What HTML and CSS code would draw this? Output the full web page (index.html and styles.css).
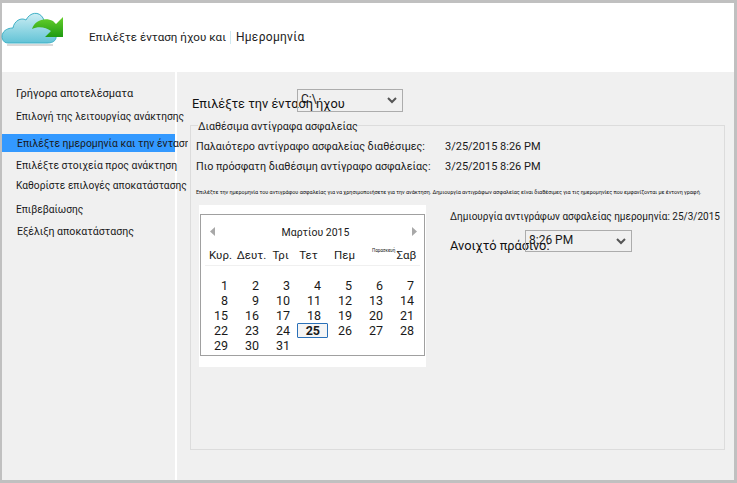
FILE: index.html
```html
<!DOCTYPE html>
<html lang="el">
<head>
    <meta charset="UTF-8">
    <title>Επιλέξτε ένταση ήχου και Ημερομηνία</title>
    <link rel="stylesheet" href="styles.css">
</head>
<body>
<div class="window">
    <header class="top">
        <svg class="logo" width="66" height="46" viewBox="0 0 66 46">
            <defs>
                <linearGradient id="cloud" x1="0" y1="0" x2="0" y2="1">
                    <stop offset="0" stop-color="#cdeef4"/>
                    <stop offset="1" stop-color="#62c3d6"/>
                </linearGradient>
                <linearGradient id="arrow" x1="0" y1="0" x2="0" y2="1">
                    <stop offset="0" stop-color="#66d02c"/>
                    <stop offset="1" stop-color="#1f9a12"/>
                </linearGradient>
            </defs>
            <path d="M6 33 H52" stroke="#000" stroke-opacity="0.15" stroke-width="2"/>
            <path d="M7 31 C1 31 0 24 2 21 C4 17 9 16 12 16 C13 9 20 5 25 8 C29 0 38 -1 42 6 C44 10 44 12 43 15 C50 16 56 21 55 26 C54 30 50 31 46 31 Z" fill="url(#cloud)" stroke="#3fb0c6" stroke-width="1"/>
            <path d="M31 17 C34 8 44 5 52 9 L55 12 L62 5 L62 25 L44 25 L50 19 C45 15 37 14 31 17 Z" fill="url(#arrow)"/>
        </svg>
        <div class="top-title">Επιλέξτε ένταση ήχου και</div>
        <div class="top-sep"></div>
        <div class="top-sub">Ημερομηνία</div>
    </header>
    <div class="content">
        <nav class="side">
            <div class="step step-1">Γρήγορα αποτελέσματα</div>
            <div class="step step-2">Επιλογή της λειτουργίας ανάκτησης</div>
            <div class="step step-3 active">Επιλέξτε ημερομηνία και την ένταση ήχου</div>
            <div class="step step-4">Επιλέξτε στοιχεία προς ανάκτηση</div>
            <div class="step step-5">Καθορίστε επιλογές αποκατάστασης</div>
            <div class="step step-6">Επιβεβαίωσης</div>
            <div class="step step-7">Εξέλιξη αποκατάστασης</div>
        </nav>
        <main class="main">
            <div class="volume-row">
                <div class="big-label volume-label">Επιλέξτε την ένταση ήχου</div>
                <div class="dropdown volume-select">
                    <span class="drop-value">C:\</span>
                    <svg width="10" height="7" viewBox="0 0 10 7"><path d="M1 1 L5 5 L9 1" fill="none" stroke="#555" stroke-width="2"/></svg>
                </div>
            </div>
            <fieldset class="backups">
                <legend>Διαθέσιμα αντίγραφα ασφαλείας</legend>
                <div class="info-row">
                    <div class="info-label">Παλαιότερο αντίγραφο ασφαλείας διαθέσιμες:</div>
                    <div class="info-date">3/25/2015 8:26 PM</div>
                </div>
                <div class="info-row">
                    <div class="info-label">Πιο πρόσφατη διαθέσιμη αντίγραφο ασφαλείας:</div>
                    <div class="info-date">3/25/2015 8:26 PM</div>
                </div>
                <p class="hint">Επιλέξτε την ημερομηνία του αντιγράφου ασφαλείας για να χρησιμοποιήσετε για την ανάκτηση. Δημιουργία αντιγράφων ασφαλείας είναι διαθέσιμες για τις ημερομηνίες που εμφανίζονται με έντονη γραφή.</p>
                <div class="pick-row">
                    <div class="cal-panel">
                        <div class="cal">
                            <div class="cal-head">
                                <svg width="6" height="9" viewBox="0 0 6 9"><path d="M5 0 V9 L0 4.5 Z" fill="#a8a8a8"/></svg>
                                <span class="cal-title">Μαρτίου 2015</span>
                                <svg width="6" height="9" viewBox="0 0 6 9"><path d="M1 0 V9 L6 4.5 Z" fill="#a8a8a8"/></svg>
                            </div>
                            <div class="cal-days">
                                <span>Κυρ.</span><span>Δευτ.</span><span class="day-tri">Τρι</span><span class="day-tet">Τετ</span><span>Πεμ</span><span class="tiny">Παρασκευή</span><span>Σαβ</span>
                            </div>
                            <div class="cal-dates">
                                <span>1</span><span>2</span><span>3</span><span>4</span><span>5</span><span>6</span><span>7</span>
                                <span>8</span><span>9</span><span>10</span><span>11</span><span>12</span><span>13</span><span>14</span>
                                <span>15</span><span>16</span><span>17</span><span>18</span><span>19</span><span>20</span><span>21</span>
                                <span>22</span><span>23</span><span>24</span><span class="today">25</span><span>26</span><span>27</span><span>28</span>
                                <span>29</span><span>30</span><span>31</span>
                            </div>
                        </div>
                    </div>
                    <div class="pick-side">
                        <div class="created">Δημιουργία αντιγράφων ασφαλείας ημερομηνία: 25/3/2015</div>
                        <div class="time-row">
                            <div class="big-label time-label">Ανοιχτό πράσινο:</div>
                            <div class="dropdown time-select">
                                <span class="drop-value">8:26 PM</span>
                                <svg width="10" height="7" viewBox="0 0 10 7"><path d="M1 1 L5 5 L9 1" fill="none" stroke="#555" stroke-width="2"/></svg>
                            </div>
                        </div>
                    </div>
                </div>
            </fieldset>
        </main>
    </div>
</div>
</body>
</html>
```
FILE: styles.css
```css
html, body {
    margin: 0;
    padding: 0;
}
body {
    width: 737px;
    height: 483px;
    overflow: hidden;
    background-color: #c0c0c0;
    font-family: "Roboto", "Noto Sans", sans-serif;
    font-size: 11px;
    color: #1a1a1a;
}
.window {
    box-sizing: border-box;
    width: 732px;
    height: 477px;
    margin: 3px 0 0 2px;
    display: flex;
    flex-direction: column;
    background-color: #f0f0f0;
}
.top {
    height: 69px;
    flex: none;
    display: flex;
    align-items: flex-start;
    background-color: #fff;
}
.logo {
    margin: 9px 22px 0 -1px;
}
.top-title {
    margin-top: 27px;
    font-size: 11.6px;
    line-height: 15px;
    color: #222;
}
.top-sep {
    width: 1px;
    height: 13px;
    margin: 28px 5px 0 4px;
    background-color: #cfe8f0;
}
.top-sub {
    margin-top: 26px;
    font-size: 12px;
    line-height: 17px;
    letter-spacing: 0.3px;
    color: #222;
}
.content {
    flex: 1;
    display: flex;
    min-height: 0;
}
.side {
    width: 173px;
    flex: none;
    padding-top: 12px;
    border-right: 2px solid #fff;
}
.step {
    width: 186px;
    height: 18px;
    box-sizing: border-box;
    padding-left: 14px;
    overflow: hidden;
    white-space: nowrap;
    line-height: 20px;
}
.step-2 { margin-top: 5px; font-size: 10.2px; }
.step-3 { margin-top: 9px; padding-left: 15px; font-size: 10.4px; }
.step-4 { margin-top: 4px; font-size: 10.4px; }
.step-5 { margin-top: 2px; font-size: 10.2px; }
.step-6 { margin-top: 6px; font-size: 10.2px; }
.step-7 { margin-top: 4px; padding-left: 15px; font-size: 10.6px; }
.active {
    background: linear-gradient(#39f, #39f) no-repeat 0 0 / 173px 100%;
}
.main {
    flex: 1;
    min-width: 0;
    padding: 0 9px 0 15px;
}
.volume-row {
    display: flex;
    margin-top: 17px;
    height: 23px;
}
.big-label {
    font-size: 12.8px;
    line-height: 23px;
    white-space: nowrap;
    color: #111;
}
.volume-label {
    width: 105px;
    margin-top: 3px;
}
.dropdown {
    box-sizing: border-box;
    display: flex;
    justify-content: space-between;
    border: 1px solid #acacac;
    font-size: 12px;
    padding: 0 5px 0 3px;
}
.dropdown svg {
    align-self: center;
}
.drop-value {
    line-height: 18px;
}
.volume-select {
    width: 106px;
    height: 23px;
}
.backups {
    box-sizing: border-box;
    height: 332px;
    margin: 6px 0 0 -2px;
    padding: 0 5px;
    border: 1px solid #dcdcdc;
    min-width: 0;
}
.backups legend {
    margin-left: 2px;
    padding: 0;
    font-size: 10.7px;
    line-height: 14px;
    transform: translateY(2px);
}
.info-row {
    display: flex;
    height: 20px;
    line-height: 20px;
    margin-top: 5px;
    font-size: 10.75px;
}
.info-row + .info-row {
    margin-top: 0;
}
.info-label {
    width: 249px;
    white-space: nowrap;
}
.info-date {
    font-size: 11px;
}
.hint {
    margin: 11px 0 0;
    font-size: 5.4px;
    line-height: 8px;
    white-space: nowrap;
    color: #111;
}
.pick-row {
    display: flex;
    margin-top: 9px;
}
.cal-panel {
    box-sizing: border-box;
    width: 227px;
    height: 162px;
    margin-left: 3px;
    padding: 9px 1px 11px;
    background-color: #fff;
}
.cal {
    box-sizing: border-box;
    height: 142px;
    border: 1px solid #a0a0a0;
    padding: 0 7px 0 9px;
}
.cal-head {
    display: flex;
    align-items: center;
    justify-content: space-between;
    height: 18px;
    margin-top: 7px;
}
.cal-title {
    margin-left: 4px;
    padding-top: 3px;
    font-size: 10.5px;
}
.cal-days {
    display: grid;
    grid-template-columns: repeat(7, 31px);
    margin: 7px -3px 0 -5px;
    padding-bottom: 2px;
    height: 16px;
    line-height: 16px;
    font-size: 11.5px;
    text-align: center;
    border-bottom: 1px solid #f0f0f0;
}
.day-tri { padding-right: 4px; }
.day-tet { padding-right: 10px; }
.tiny {
    font-size: 4.5px;
    line-height: 8px;
    padding-left: 12px;
    white-space: nowrap;
}
.cal-dates {
    display: grid;
    grid-template-columns: repeat(7, 31px);
    grid-auto-rows: 15px;
    margin: 12px 0 0 -6px;
    font-size: 12.5px;
    line-height: 15px;
    text-align: right;
}
.cal-dates span {
    box-sizing: border-box;
    padding-right: 7px;
}
.cal-dates .today {
    border: 1px solid #2a70b8;
    border-radius: 1px;
    background-color: #f5f5f5;
    font-weight: bold;
    line-height: 13px;
}
.pick-side {
    margin-left: 24px;
}
.created {
    margin-top: 5px;
    font-size: 10px;
    line-height: 14px;
    white-space: nowrap;
}
.time-row {
    display: flex;
    margin-top: 6px;
}
.time-label {
    width: 75px;
    margin-top: 4px;
}
.time-select {
    width: 107px;
    height: 22px;
}
```
